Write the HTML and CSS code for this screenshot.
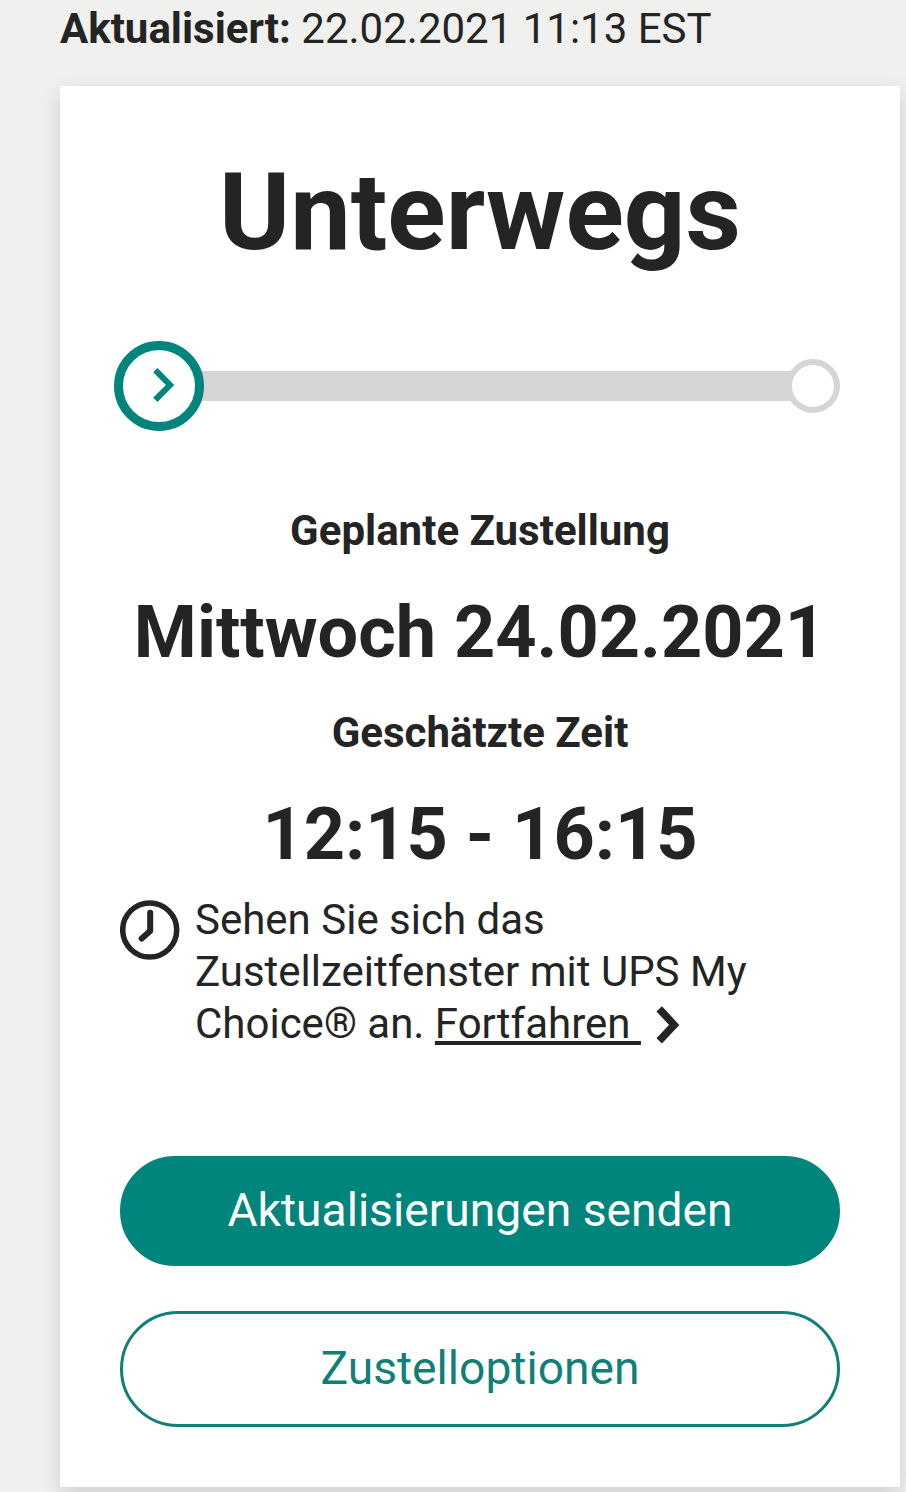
FILE: index.html
```html
<!DOCTYPE html>
<html lang="de">
<head>
    <meta charset="utf-8">
    <title>Sendungsverfolgung</title>
    <link rel="stylesheet" href="styles.css">
</head>
<body>
    <p class="updated"><strong>Aktualisiert:</strong> 22.02.2021 11:13 EST</p>

    <main class="card">
        <h1>Unterwegs</h1>

        <div class="progress">
            <span class="step current">
                <svg width="24" height="36" viewBox="0 0 24 36"><path d="M2.3 2.2 L17 17 L2.3 31.8" /></svg>
            </span>
            <span class="bar"></span>
            <span class="step end"></span>
        </div>

        <h2 class="label">Geplante Zustellung</h2>
        <p class="value">Mittwoch 24.02.2021</p>
        <h2 class="label">Geschätzte Zeit</h2>
        <p class="value">12:15 - 16:15</p>

        <div class="notice">
            <svg class="clock" width="60" height="60" viewBox="0 0 60 60">
                <circle cx="29.7" cy="30" r="27" />
                <path d="M30.2 12.8 V31 L21.7 38.6" />
            </svg>
            <p>Sehen Sie sich das Zustellzeitfenster mit UPS My Choice® an. <a href="#">Fortfahren&nbsp;</a><svg class="arrow" width="24" height="38" viewBox="0 0 24 38"><path d="M3.2 2.9 L18.2 18.9 L3.2 34.9" /></svg></p>
        </div>

        <div class="actions">
            <button class="primary">Aktualisierungen senden</button>
            <button class="secondary">Zustelloptionen</button>
        </div>
    </main>
</body>
</html>
```

FILE: styles.css
```css
* {
    box-sizing: border-box;
}

body {
    margin: 0;
    height: 1492px;
    overflow: hidden;
    background-color: #f0f0ee;
    color: #242424;
    font-family: Roboto, sans-serif;
}

h1, h2, p {
    margin: 0;
}

.updated {
    height: 86px;
    padding: 3px 0 0 60px;
    font-size: 42px;
    line-height: 52px;
}

.card {
    width: 840px;
    height: 1401px;
    margin-left: 60px;
    padding: 60px 60px 0;
    background-color: #fff;
    box-shadow: 0 7px 20px rgba(0, 0, 0, 0.15);
}

h1 {
    font-size: 108px;
    line-height: 132px;
    text-align: center;
}

.progress {
    display: flex;
    align-items: center;
    height: 90px;
    margin: 63px 0 0 -6px;
}

.step {
    flex: none;
    border-radius: 50%;
    background-color: #fff;
}

.current {
    z-index: 1;
    display: flex;
    align-items: center;
    justify-content: center;
    width: 90px;
    height: 90px;
    padding-left: 12px;
    border: 9px solid #00857d;
}

    .current path {
        fill: none;
        stroke: #00857d;
        stroke-width: 6;
    }

.bar {
    flex: 1;
    height: 30px;
    margin: 0 -6px;
    background-color: #d5d5d5;
}

.end {
    width: 54px;
    height: 54px;
    border: 6px solid #d5d5d5;
}

.label {
    margin-top: 24px;
    font-size: 42px;
    line-height: 52px;
    text-align: center;
}

.progress + .label {
    margin-top: 74px;
}

.value {
    margin-top: 26px;
    font-size: 72px;
    font-weight: bold;
    line-height: 100px;
    text-align: center;
}

.notice {
    display: flex;
    gap: 15px;
    margin-top: 9px;
}

    .notice p {
        font-size: 42px;
        line-height: 52px;
    }

    .notice a {
        color: inherit;
    }

.clock {
    flex: none;
    margin-top: 6px;
    fill: none;
    stroke: #242424;
    stroke-width: 5.5;
    stroke-linecap: round;
    stroke-linejoin: round;
}

    .clock path {
        stroke-width: 6;
    }

.arrow {
    margin-left: 15px;
    vertical-align: -6px;
    fill: none;
    stroke: #242424;
    stroke-width: 7.5;
}

.actions {
    display: flex;
    flex-direction: column;
    gap: 45px;
    margin-top: 106px;
}

    .actions button {
        padding: 0 0 2px;
        border: 3px solid #00857d;
        border-radius: 60px;
        font-family: inherit;
        font-size: 46.2px;
    }

    .actions .primary {
        height: 110px;
        background-color: #00857d;
        color: #fff;
    }

    .actions .secondary {
        height: 116px;
        border-color: #107f77;
        background-color: #fff;
        color: #107f77;
    }
```
